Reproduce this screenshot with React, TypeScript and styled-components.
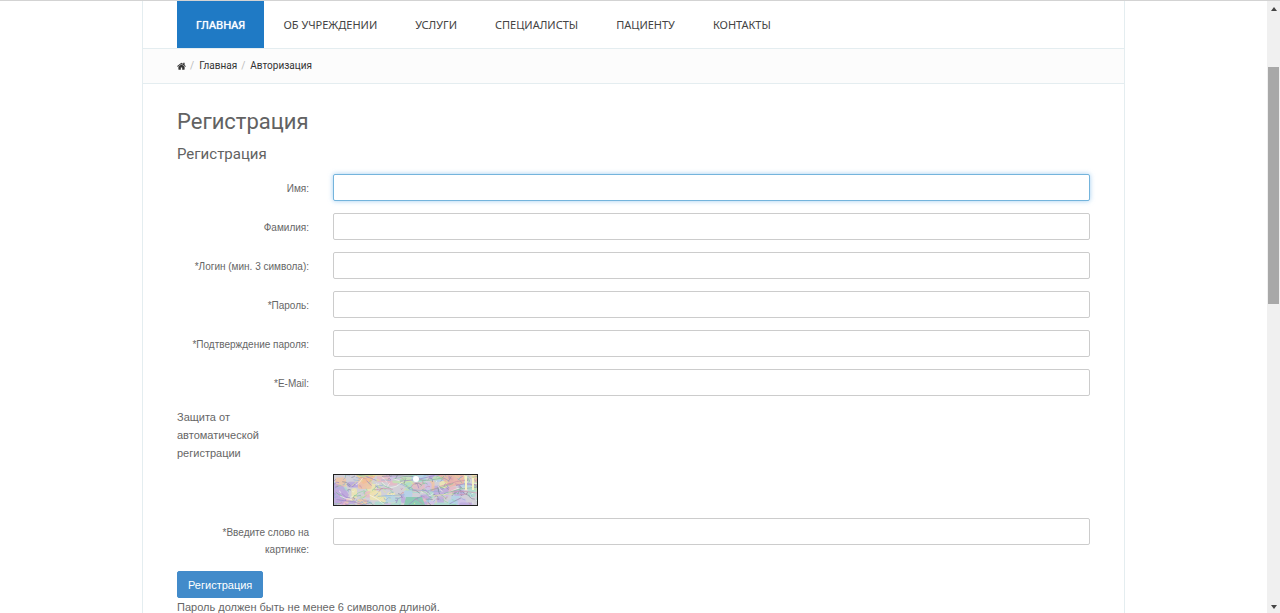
import React from 'react';
import styled, { createGlobalStyle, css } from 'styled-components';

const Global = createGlobalStyle`
  *, *::before, *::after { box-sizing: border-box; }
  body {
    margin: 0;
    background: #fff;
    color: #666;
    font-family: "Liberation Sans", Arial, sans-serif;
    font-size: 11px;
    line-height: 18px;
  }
`;

const Screen = styled.div`
  display: grid;
  grid-template-columns: minmax(0, 1fr) 13px;
  height: 100vh;
  overflow: hidden;
  border-top: 1px solid #d3d3d3;
`;

const Viewport = styled.div`
  min-height: 0;
  overflow: hidden;
`;

const Page = styled.div`
  max-width: 983px;
  min-height: 100%;
  margin: 0 auto;
  border: solid #e4edf0;
  border-width: 0 1px;
`;

const Nav = styled.nav`
  display: flex;
  padding: 0 34px;
  border-bottom: 1px solid #e4edf0;
`;

const NavLink = styled.a<{ $active?: boolean }>`
  padding: 0 19px;
  font-family: "Noto Sans", "Open Sans", sans-serif;
  font-size: 11px;
  line-height: 47px;
  text-decoration: none;
  white-space: nowrap;
  color: ${(p) => (p.$active ? '#fff' : '#444')};
  background: ${(p) => (p.$active ? '#1f7ac5' : 'transparent')};
  ${(p) => p.$active && css`text-shadow: 0 0 1px #fff;`}
`;

const Crumbs = styled.ol`
  display: flex;
  align-items: center;
  height: 35px;
  margin: 0;
  padding: 0 34px;
  list-style: none;
  background: #fcfcfc;
  border-bottom: 1px solid #e4edf0;
  font-family: Roboto, sans-serif;
  font-size: 10px;
`;

const Crumb = styled.li`
  display: flex;
  align-items: center;

  & + &::before {
    content: "/";
    padding: 0 5px 0 4px;
    color: #bbb;
  }
`;

const CrumbLink = styled.a`
  display: flex;
  color: #333;
  text-decoration: none;
`;

const HomeIcon = styled.svg`
  width: 9px;
  height: 9px;
  fill: currentColor;
`;

const Main = styled.main`
  padding: 24px 34px 0;
`;

const Title = styled.h1`
  margin: 0;
  font: 400 22px/28px Roboto, sans-serif;
  color: #626262;
`;

const Form = styled.form`
  display: flex;
  flex-direction: column;
`;

const Subtitle = styled.h2`
  margin: 8px 0 10px;
  font: 400 15px/20px Roboto, sans-serif;
  color: #626262;
`;

const Row = styled.div`
  display: grid;
  grid-template-columns: 132px minmax(0, 1fr);
  column-gap: 24px;
  align-items: start;
  margin-bottom: 12px;
`;

const Label = styled.label`
  padding-top: 6px;
  font-size: 10px;
  line-height: 17px;
  text-align: right;
`;

const Fields = styled.div`
  display: flex;
  flex-direction: column;
`;

const Field = styled.input<{ $active?: boolean }>`
  width: 100%;
  height: 27px;
  padding: 4px 8px;
  border: 1px solid #ccc;
  border-radius: 2px;
  background: #fff;
  font: inherit;
  color: #555;
  outline: none;
  ${(p) => p.$active && css`
    border-color: #74b4dc;
    box-shadow: 0 0 5px rgba(102, 175, 233, 0.6);
  `}
`;

const Protection = styled.p`
  width: 110px;
  margin: 0 0 12px;
`;

const Captcha = styled.svg`
  grid-column: 2;
  display: block;
  width: 145px;
  height: 32px;
  border: 1px solid #222;
`;

const Submit = styled.button`
  align-self: flex-start;
  height: 27px;
  margin-top: 1px;
  padding: 0 10px;
  border: 1px solid #428bca;
  border-radius: 2px;
  background: #428bca;
  color: #fff;
  font: inherit;
`;

const Hint = styled.p`
  margin: 0;
  white-space: nowrap;
`;

const Scrollbar = styled.div`
  display: flex;
  flex-direction: column;
  align-items: center;
  padding: 6px 0 4px;
  background: #f0f0f0;
`;

const Arrow = styled.svg`
  display: block;
  flex: none;
  width: 6px;
  height: 4px;
  fill: #444;
`;

const Track = styled.div`
  display: grid;
  flex: 1;
  grid-template-rows: 56fr 237fr 301fr;
  align-self: stretch;
  padding: 0 1px;
`;

const Thumb = styled.div`
  grid-row: 2;
  background: #a8a8a8;
`;

const menu = ['ГЛАВНАЯ', 'ОБ УЧРЕЖДЕНИИ', 'УСЛУГИ', 'СПЕЦИАЛИСТЫ', 'ПАЦИЕНТУ', 'КОНТАКТЫ'];

const fields = [
  { id: 'name', label: 'Имя:', type: 'text' },
  { id: 'surname', label: 'Фамилия:', type: 'text' },
  { id: 'login', label: '*Логин (мин. 3 символа):', type: 'text' },
  { id: 'password', label: '*Пароль:', type: 'password' },
  { id: 'confirm', label: '*Подтверждение пароля:', type: 'password' },
  { id: 'email', label: '*E-Mail:', type: 'email' },
];

// Seeded noise keeps the captcha pattern the same on every render.
function noise(seed: number) {
  let s = seed;
  return () => {
    s = (s * 16807) % 2147483647;
    return s / 2147483647;
  };
}

const patchColors = ['#f0c4a4', '#b3d3e8', '#c3e4b4', '#cfbfe8', '#e8b8c6', '#acdccf', '#efe6b0', '#bcaade'];
const lineColors = ['#9a84c8', '#7dbb98', '#dce49a', '#8db2d6', '#c990aa', '#f4f8ee', '#92d6a0', '#84899c'];

const rand = noise(90210);
const pick = (colors: string[]) => colors[Math.floor(rand() * colors.length)];

const patches = Array.from({ length: 80 }, () => ({
  x: rand() * 148 - 5,
  y: rand() * 34 - 4,
  w: 4 + rand() * 13,
  h: 3 + rand() * 8,
  fill: pick(patchColors),
}));

// Short scribbles, followed by long strokes that fan out to both sides.
const strokes = Array.from({ length: 260 }, (_, i) => {
  const long = i > 210;
  const x = rand() * 143;
  const y = rand() * 30;
  const dx = (rand() - 0.4) * (long ? 60 : 14);
  const dy = (rand() - 0.4) * (long ? 18 : 9);
  return {
    d: `M${x} ${y}q${dx / 2} ${dy / 2 + (rand() - 0.5) * 6} ${dx} ${dy}`,
    stroke: pick(lineColors),
  };
});

function CaptchaPicture() {
  return (
    <Captcha viewBox="0 0 143 30" role="img" aria-label="CAPTCHA">
      <rect width="143" height="30" fill="#d2d0d8" />
      {patches.map((p, i) => (
        <rect key={i} x={p.x} y={p.y} width={p.w} height={p.h} rx="2" fill={p.fill} opacity="0.85" />
      ))}
      <path d="M0 8l9 3 6 9-7 10H0z" fill="#b9a0dc" opacity="0.7" />
      <path d="M22 0h20l-4 6-9 3z" fill="#f2bf98" />
      <path d="M104 0h26v9l-14 3z" fill="#efb3a2" opacity="0.8" />
      <path d="M72 22h16l3 8H70z" fill="#8dc9b4" />
      {strokes.map((l, i) => (
        <path key={i} d={l.d} stroke={l.stroke} fill="none" strokeWidth="0.8" opacity="0.8" />
      ))}
      <circle cx="82" cy="4" r="3" fill="#fff" />
      <path d="M132 1v14M139 3v12" stroke="#f6f3c4" strokeWidth="2" />
    </Captcha>
  );
}

export default function App() {
  return (
    <>
      <Global />
      <Screen>
        <Viewport>
          <Page>
            <Nav>
              {menu.map((item, i) => (
                <NavLink key={item} href="#" $active={i === 0}>{item}</NavLink>
              ))}
            </Nav>
            <Crumbs>
              <Crumb>
                <CrumbLink href="#" aria-label="Главная">
                  <HomeIcon viewBox="60 200 1672 1500">
                    <path d="M1472 992v480q0 26-19 45t-45 19h-384v-384h-256v384h-384q-26 0-45-19t-19-45v-480q0-1 .5-3t.5-3l575-474 575 474q1 2 1 6zm223-69l-62 74q-8 9-21 11h-3q-13 0-21-7l-692-577-692 577q-12 8-24 7-13-2-21-11l-62-74q-8-10-7-23.5t11-21.5l719-599q32-26 76-26t76 26l244 204v-195q0-14 9-23t23-9h192q14 0 23 9t9 23v408l219 182q10 8 11 21.5t-7 23.5z" />
                  </HomeIcon>
                </CrumbLink>
              </Crumb>
              <Crumb><CrumbLink href="#">Главная</CrumbLink></Crumb>
              <Crumb><CrumbLink href="#">Авторизация</CrumbLink></Crumb>
            </Crumbs>
            <Main>
              <Title>Регистрация</Title>
              <Form onSubmit={(e) => e.preventDefault()}>
                <Subtitle>Регистрация</Subtitle>
                <Fields>
                  {fields.map((f, i) => (
                    <Row key={f.id}>
                      <Label htmlFor={f.id}>{f.label}</Label>
                      <Field id={f.id} type={f.type} $active={i === 0} />
                    </Row>
                  ))}
                </Fields>
                <Protection>Защита от автоматической регистрации</Protection>
                <Row><CaptchaPicture /></Row>
                <Row>
                  <Label htmlFor="word">*Введите слово на картинке:</Label>
                  <Field id="word" type="text" />
                </Row>
                <Submit type="submit">Регистрация</Submit>
              </Form>
              <Hint>Пароль должен быть не менее 6 символов длиной.</Hint>
            </Main>
          </Page>
        </Viewport>
        <Scrollbar aria-hidden="true">
          <Arrow viewBox="0 0 6 4"><path d="M3 0L6 4H0Z" /></Arrow>
          <Track><Thumb /></Track>
          <Arrow viewBox="0 0 6 4"><path d="M0 0H6L3 4Z" /></Arrow>
        </Scrollbar>
      </Screen>
    </>
  );
}
